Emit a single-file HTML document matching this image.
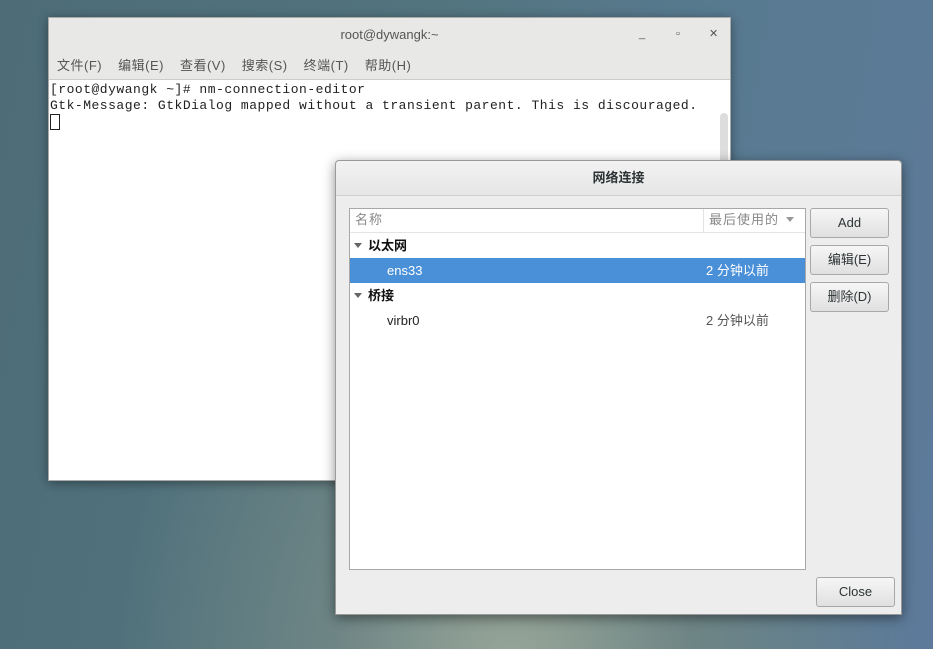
<!DOCTYPE html>
<html><head><meta charset="utf-8"><style>
*{margin:0;padding:0;box-sizing:border-box}
body{width:933px;height:649px;overflow:hidden;position:relative;font-family:"Liberation Sans","Noto Sans CJK SC",sans-serif;
background:radial-gradient(ellipse at 55% 105%,#9aa89a 0%,#6e8585 25%,transparent 55%),linear-gradient(100deg,#4d6c78 0%,#52747e 40%,#587a90 70%,#5d7a9a 100%);}
.term{position:absolute;left:48px;top:17px;width:683px;height:464px;background:#fff;border:1px solid #aaa;box-shadow:0 2px 10px rgba(0,0,0,.4)}
.tt{height:33px;background:#e8e8e7;text-align:center;font-size:13px;color:#555;line-height:33px;position:relative}
.ctl{position:absolute;top:0;font-size:11px;color:#555}
.menu{height:29px;background:#e8e8e7;font-size:13px;color:#555;line-height:29px;padding-left:8px;border-bottom:1px solid #ccc;letter-spacing:.5px}
.menu span{margin-right:16px}
.con{font-family:"Liberation Mono","Noto Sans CJK SC",monospace;font-size:13px;line-height:16px;color:#222;padding:2px 1px;letter-spacing:.5px}
.cur{display:inline-block;width:10px;height:16px;border:1px solid #222;vertical-align:top}
.sb{position:absolute;left:671px;top:95px;width:8px;height:60px;background:#ddd;border-radius:4px}
.dlg{position:absolute;left:335px;top:160px;width:567px;height:455px;background:#ededed;border:1px solid #999;box-shadow:0 3px 12px rgba(0,0,0,.45);border-radius:4px 4px 0 0}
.dt{height:35px;text-align:center;line-height:33px;font-size:13px;font-weight:bold;color:#2e3436;background:linear-gradient(#f2f2f2,#e6e6e6);border-bottom:1px solid #d0d0d0;border-radius:4px 4px 0 0}
.list{position:absolute;left:13px;top:47px;width:457px;height:362px;background:#fff;border:1px solid #a8a8a8}
.row{position:absolute;left:0;width:455px;height:25px;font-size:13px;line-height:25px}
.btn{position:absolute;width:79px;height:30px;border:1px solid #a8a8a8;border-radius:3px;background:linear-gradient(#f6f6f6,#e0e0e0);font-size:13px;color:#2e3436;text-align:center;line-height:28px}
.tri{display:inline-block;width:0;height:0;border-left:4px solid transparent;border-right:4px solid transparent;border-top:5px solid #666;vertical-align:middle;margin:0 6px 2px 4px}
</style></head><body>
<div class="term">
 <div class="tt">root@dywangk:~<span class="ctl" style="left:590px">_</span><span class="ctl" style="left:627px">▫</span><span class="ctl" style="left:660px">✕</span></div>
 <div class="menu"><span>文件(F)</span><span>编辑(E)</span><span>查看(V)</span><span>搜索(S)</span><span>终端(T)</span><span>帮助(H)</span></div>
 <div class="con">[root@dywangk ~]# nm-connection-editor<br>Gtk-Message: GtkDialog mapped without a transient parent. This is discouraged.<br><span class="cur"></span></div>
 <div class="sb"></div>
</div>
<div class="dlg">
 <div class="dt">网络连接</div>
 <div class="list">
  <div class="row" style="top:0;height:24px;color:#888;border-bottom:1px solid #e4e4e4;line-height:22px"><span style="padding-left:5px;letter-spacing:1px">名称</span><span style="position:absolute;left:353px;top:0;height:23px;border-left:1px solid #e4e4e4;padding-left:5px;letter-spacing:1px">最后使用的 <span class="tri" style="border-top-color:#999;margin:0 0 2px 2px"></span></span></div>
  <div class="row" style="top:24px;font-weight:bold;color:#111"><span class="tri"></span>以太网</div>
  <div class="row" style="top:49px;background:#4a90d9;color:#fff"><span style="padding-left:37px">ens33</span><span style="position:absolute;left:356px">2 分钟以前</span></div>
  <div class="row" style="top:74px;font-weight:bold;color:#111"><span class="tri"></span>桥接</div>
  <div class="row" style="top:99px;color:#222"><span style="padding-left:37px">virbr0</span><span style="position:absolute;left:356px;color:#555">2 分钟以前</span></div>
 </div>
 <div class="btn" style="left:474px;top:47px">Add</div>
 <div class="btn" style="left:474px;top:84px">编辑(E)</div>
 <div class="btn" style="left:474px;top:121px">删除(D)</div>
 <div class="btn" style="left:480px;top:416px">Close</div>
</div>
</body></html>
